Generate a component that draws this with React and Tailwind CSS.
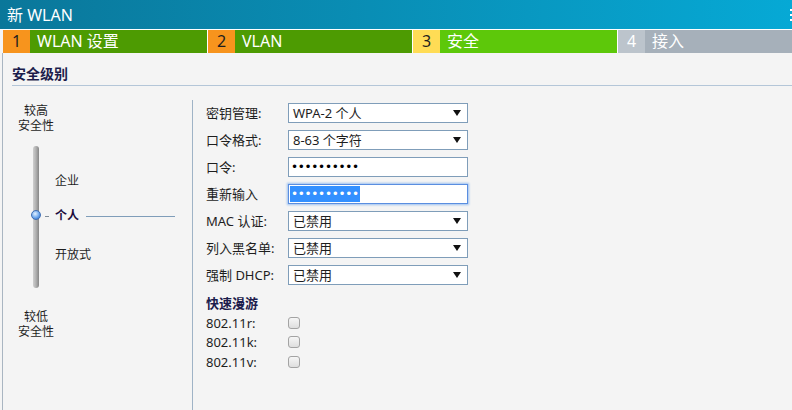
import React from 'react';

const steps = [
  { n: '1', label: 'WLAN 设置', numBg: 'bg-[#f7941d]', bg: 'bg-[#4d9b02]', numText: 'text-[#1e1e1e]' },
  { n: '2', label: 'VLAN', numBg: 'bg-[#f7941d]', bg: 'bg-[#4d9b02]', numText: 'text-[#1e1e1e]' },
  { n: '3', label: '安全', numBg: 'bg-[#ffdc55]', bg: 'bg-[#5dc80a]', numText: 'text-[#1e1e1e]' },
  { n: '4', label: '接入', numBg: 'bg-[#bcc4cc]', bg: 'bg-[#a6b0ba]', numText: 'text-white' },
];

const fields = [
  { label: '密钥管理:', type: 'select', value: 'WPA-2 个人' },
  { label: '口令格式:', type: 'select', value: '8-63 个字符' },
  { label: '口令:', type: 'password' },
  { label: '重新输入', type: 'selected' },
  { label: 'MAC 认证:', type: 'select', value: '已禁用' },
  { label: '列入黑名单:', type: 'select', value: '已禁用' },
  { label: '强制 DHCP:', type: 'select', value: '已禁用' },
];

const DOTS = '••••••••••';

function Arrow() {
  return (
    <svg width="8" height="6" viewBox="0 0 8 6" className="shrink-0">
      <path d="M0 0h8L4 6z" fill="#111" />
    </svg>
  );
}

function Field({ f }) {
  if (f.type === 'select') {
    return (
      <div className="w-[180px] h-[20px] bg-white border border-[#7f9db9] flex items-center justify-between pl-[4px] pr-[6px] text-[13px] leading-[18px] text-[#1e1e1e]">
        <span>{f.value}</span>
        <Arrow />
      </div>
    );
  }
  if (f.type === 'password') {
    return (
      <div className="w-[180px] h-[20px] bg-white border border-[#7f9db9] flex items-center pl-[2px] font-['DejaVu_Sans',sans-serif] text-[12px] leading-[16px] text-black">
        <span className="tracking-[-0.3px]">{DOTS}</span>
      </div>
    );
  }
  return (
    <div className="w-[180px] h-[20px] bg-white border border-[#5a8ee0] shadow-[0_0_2px_1px_#9cc0f0] flex items-center pl-[1px] font-['DejaVu_Sans',sans-serif] text-[12px] leading-[16px]">
      <span className="tracking-[-0.3px] text-white bg-[#3390ff] pl-[1px] pr-[1px]">{DOTS}</span>
    </div>
  );
}

export default function App() {
  return (
    <div className="w-[792px] h-[410px] overflow-hidden bg-[#f4f4f4] flex flex-col font-['Noto_Sans','Noto_Sans_CJK_SC',sans-serif]">
      <div className="h-[29px] shrink-0 bg-gradient-to-r from-[#0a779a] to-[#06a9d5] flex items-center justify-between pl-[7px] text-white text-[16px] leading-[20px]">
        <span>新 WLAN</span>
        <div className="w-[2px] flex flex-col gap-[3px]">
          <div className="h-[2px] bg-white" />
          <div className="h-[2px] bg-white" />
          <div className="h-[2px] bg-white" />
        </div>
      </div>

      <div className="h-[24px] shrink-0 border-t border-white flex pl-[3px] text-[16px] leading-[23px]">
        <div className="flex flex-1 gap-px bg-white">
          {steps.map((s, i) => (
            <div key={s.n} className={`flex h-full ${s.bg} ${i === 3 ? 'flex-1' : 'w-[204px]'}`}>
              <div className={`w-[27px] h-full ${s.numBg} ${s.numText} flex items-center justify-center`}>
                {s.n}
              </div>
              <span className="pl-[7px] text-white">{s.label}</span>
            </div>
          ))}
        </div>
      </div>

      <div className="flex-1 ml-[2px] border-l border-[#a9b5c1] pl-[9px] flex flex-col">
        <div className="pt-[13px] pb-[3px] border-b border-[#b4c6d8] text-[14px] leading-[16px] font-bold text-[#1c1c4c]">
          安全级别
        </div>

        <div className="flex flex-1 mt-[14px]">
          {/* security level slider */}
          <div className="w-[180px] flex flex-col pt-[4px] text-[12px] leading-[14.5px] text-[#1e1e1e]">
            <div className="w-[48px] text-center">
              <div>较高</div>
              <div>安全性</div>
            </div>

            <div className="flex mt-[13px] pl-[21px]">
              <div className="relative w-[6px] h-[142px] rounded-full bg-gradient-to-r from-[#cfcfcf] via-[#b0b0b0] to-[#868686]">
                <div className="absolute left-[-2px] top-[64px] w-[10px] h-[10px] rounded-full border border-[#3f6fb4] bg-[radial-gradient(circle_at_40%_35%,#e4f2ff,#6aa6ee_55%,#2d62b4)]" />
              </div>
              <div className="flex flex-col ml-[6px] leading-[14px]">
                <span className="mt-[28px] pl-[10px]">企业</span>
                <div className="mt-[21px] flex items-center h-[14px]">
                  <div className="w-[4px] h-px bg-[#7f8c98]" />
                  <span className="ml-[6px] font-bold text-[#200c3c]">个人</span>
                  <div className="ml-[7px] w-[89px] h-px bg-[#7f9db9]" />
                </div>
                <span className="mt-[25px] pl-[10px]">开放式</span>
              </div>
            </div>

            <div className="w-[48px] text-center mt-[22px]">
              <div>较低</div>
              <div>安全性</div>
            </div>
          </div>

          {/* form */}
          <div className="flex-1 border-l border-[#9fb3c6] pl-[13px] pt-[3px] flex flex-col text-[13px] text-[#1e1e1e]">
            {fields.map((f) => (
              <div key={f.label} className="flex items-center mb-[7px] leading-[20px]">
                <span className="w-[82px]">{f.label}</span>
                <Field f={f} />
              </div>
            ))}

            <div className="mt-[3px] leading-[16px] font-bold text-[#1c1c4c]">快速漫游</div>
            <div className="flex flex-col mt-[2px] leading-[18px]">
              {['802.11r:', '802.11k:', '802.11v:'].map((t) => (
                <div key={t} className="flex items-center h-[19.5px]">
                  <span className="w-[82px]">{t}</span>
                  <div className="w-[12px] h-[12px] rounded-[3px] border border-[#a3a3a3] bg-gradient-to-b from-[#f6f6f6] to-[#dedede]" />
                </div>
              ))}
            </div>
          </div>
        </div>
      </div>
    </div>
  );
}
